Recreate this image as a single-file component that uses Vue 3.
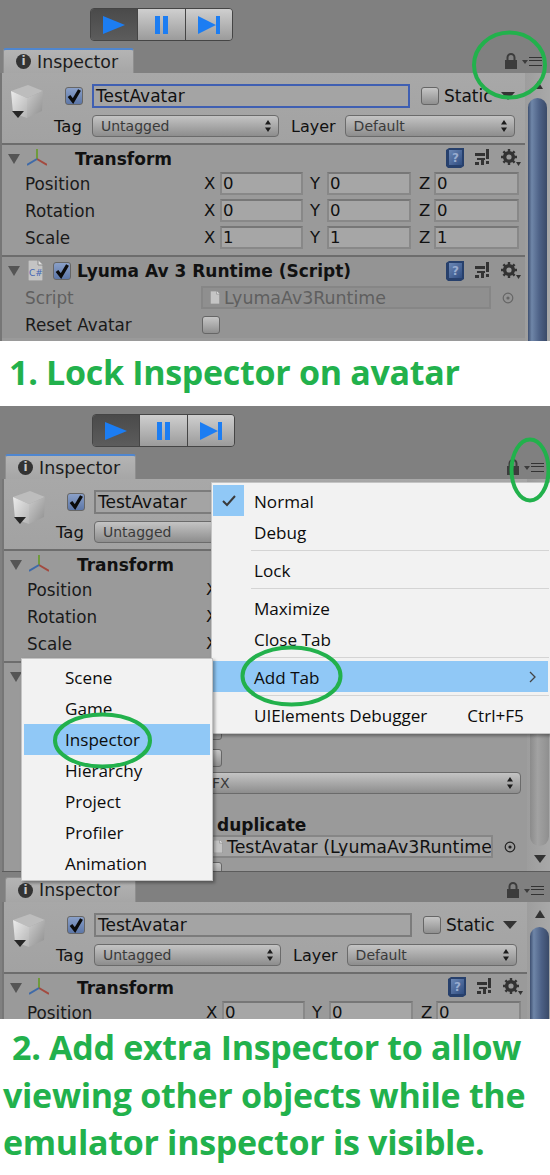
<script setup>
const transformRows = [
  { label: 'Position', value: '0' },
  { label: 'Rotation', value: '0' },
  { label: 'Scale', value: '1' },
]

const panels = [
  { id: 1, toolbar: true, focused: true, height: 341 },
  { id: 2, toolbar: true, focused: false, height: 465 },
  { id: 3, toolbar: false, focused: false, height: 148 },
]

const mainMenu = [
  [{ text: 'Normal', checked: true }, { text: 'Debug' }],
  [{ text: 'Lock' }],
  [{ text: 'Maximize' }, { text: 'Close Tab' }],
  [{ text: 'Add Tab', active: true, arrow: true }],
  [{ text: 'UIElements Debugger', shortcut: 'Ctrl+F5' }],
]

const tabMenu = ['Scene', 'Game', 'Inspector', 'Hierarchy', 'Project', 'Profiler', 'Animation']
</script>

<template>
  <div class="page">
    <svg class="defs" width="0" height="0" aria-hidden="true">
      <defs>
        <linearGradient id="cube-left" x1="0" y1="0" x2="1" y2="1">
          <stop offset="0" stop-color="#ececec" />
          <stop offset="1" stop-color="#b4b4b4" />
        </linearGradient>
        <linearGradient id="cube-right" x1="0" y1="0" x2="1" y2="1">
          <stop offset="0" stop-color="#cccccc" />
          <stop offset="1" stop-color="#8e8e8e" />
        </linearGradient>
        <linearGradient id="book" x1="0" y1="0" x2="1" y2="1">
          <stop offset="0" stop-color="#6c88b6" />
          <stop offset="1" stop-color="#2f4c80" />
        </linearGradient>
      </defs>
      <symbol id="i-cube" viewBox="0 0 34 34">
        <polygon points="1,6 18,0 33,6 17,13" fill="#bdbdbd" />
        <polygon points="1,6 17,13 17,33 3,28" fill="url(#cube-left)" />
        <polygon points="17,13 33,6 32,26 17,33" fill="url(#cube-right)" />
      </symbol>
      <symbol id="i-axis" viewBox="0 0 20 18">
        <path d="M10 10 V0" stroke="#6f9a3c" stroke-width="2" fill="none" />
        <path d="M10 10 L20 16" stroke="#a34a3f" stroke-width="2" fill="none" />
        <path d="M10 10 L0 16" stroke="#3f6aa8" stroke-width="2" fill="none" />
      </symbol>
      <symbol id="i-help" viewBox="0 0 18 20">
        <path d="M0 2 L3 0 H18 V18 L15 20 H2 L0 18 Z" fill="#27406c" />
        <rect x="3" y="2" width="13" height="15" fill="url(#book)" />
        <text x="9.5" y="14" font-size="12" font-weight="700" font-family="DejaVu Sans, sans-serif" text-anchor="middle" fill="#98acd0">?</text>
      </symbol>
      <symbol id="i-preset" viewBox="0 0 15 20">
        <path d="M0 5 H10 V8 H0 Z M11 1 H14 V11 H11 Z M11 13 H14 V16 H11 Z M2 10 H10 V12 H2 Z M6 12 H9 V17 H6 Z M0 14 H4 V17 H0 Z" fill="#333" />
      </symbol>
      <symbol id="i-gear" viewBox="0 0 20 18">
        <circle cx="8" cy="8" r="4.6" fill="none" stroke="#333" stroke-width="3" />
        <path d="M8 0 V16 M0 8 H16 M2.4 2.4 L13.6 13.6 M13.6 2.4 L2.4 13.6" stroke="#333" stroke-width="2.4" />
        <circle cx="8" cy="8" r="2.6" fill="#999" />
        <path d="M15 13 H20 L17.5 17 Z" fill="#333" />
      </symbol>
      <symbol id="i-file" viewBox="0 0 15 21">
        <path d="M0 0 H10 L15 5 V21 H0 Z" fill="#c4c4c4" stroke="#8a8a8a" />
        <path d="M10 0 V5 H15" fill="#e0e0e0" stroke="#8a8a8a" />
      </symbol>
      <symbol id="i-lock" viewBox="0 0 14 16">
        <path d="M3.5 7 V4.5 A3.5 3.5 0 0 1 10.5 4.5 V7" fill="none" stroke="#3c3c3c" stroke-width="2" />
        <rect x="1" y="7" width="12" height="9" fill="#3c3c3c" />
      </symbol>
      <symbol id="i-target" viewBox="0 0 12 12">
        <circle cx="6" cy="6" r="4.8" fill="none" stroke="currentColor" stroke-width="1.2" />
        <circle cx="6" cy="6" r="1.6" fill="currentColor" />
      </symbol>
      <symbol id="i-tick" viewBox="0 0 16 16">
        <path d="M3 8 L7 13 L13.5 2" fill="none" stroke="#0b0b0b" stroke-width="3.3" />
      </symbol>
      <symbol id="i-updown" viewBox="0 0 6 12">
        <path d="M3 0 L6 4.6 H0 Z M3 12 L0 7.4 H6 Z" fill="#1c1c1c" />
      </symbol>
    </svg>

    <template v-for="p in panels" :key="p.id">
      <section class="panel" :class="{ inset: p.id > 1, last: p.id === 3 }" :style="{ height: p.height + 'px' }">
        <div v-if="p.toolbar" class="toolbar">
          <div class="play-group">
            <button class="play-btn on">
              <svg width="24" height="20" viewBox="0 0 24 20"><path d="M1 1 L23 10 L1 19 Z" fill="#1c7df2" /></svg>
            </button>
            <button class="play-btn">
              <svg width="15" height="20" viewBox="0 0 15 20"><path d="M1 1 H6 V19 H1 Z M9 1 H14 V19 H9 Z" fill="#1c7df2" /></svg>
            </button>
            <button class="play-btn">
              <svg width="24" height="20" viewBox="0 0 24 20"><path d="M1 1 L19 10 L1 19 Z M19 1 H23 V19 H19 Z" fill="#1c7df2" /></svg>
            </button>
          </div>
        </div>

        <div class="tabbar">
          <div class="tab" :class="{ focused: p.id !== 3 }">
            <span class="info">i</span>
            <span>Inspector</span>
          </div>
          <div class="tab-tools">
            <svg width="14" height="16"><use href="#i-lock" /></svg>
            <span class="caret"></span>
            <span class="lines"></span>
          </div>
        </div>

        <div class="main">
          <div class="content">
            <header class="head">
              <div class="cube">
                <svg width="34" height="34"><use href="#i-cube" /></svg>
                <span class="cube-arrow"></span>
              </div>
              <div class="head-rows">
                <div class="head-row first">
                  <span class="check on"><svg width="16" height="16"><use href="#i-tick" /></svg></span>
                  <div class="name" :class="{ focused: p.focused }">TestAvatar</div>
                  <span class="check"></span>
                  <span class="static">Static</span>
                  <span class="static-arrow"></span>
                </div>
                <div class="head-row">
                  <span class="head-label tag">Tag</span>
                  <div class="dropdown tag-drop">Untagged<svg width="6" height="12"><use href="#i-updown" /></svg></div>
                  <span class="head-label layer">Layer</span>
                  <div class="dropdown layer-drop">Default<svg width="6" height="12"><use href="#i-updown" /></svg></div>
                </div>
              </div>
            </header>

            <div class="comp transform-comp">
              <div class="comp-head">
                <span class="fold"></span>
                <svg class="axis" width="20" height="18"><use href="#i-axis" /></svg>
                <span class="comp-title transform">Transform</span>
                <div class="comp-tools">
                  <svg width="18" height="20"><use href="#i-help" /></svg>
                  <svg width="15" height="20"><use href="#i-preset" /></svg>
                  <svg width="20" height="18"><use href="#i-gear" /></svg>
                </div>
              </div>
              <div v-for="r in transformRows" :key="r.label" class="row">
                <span class="label">{{ r.label }}</span>
                <span class="axis-l x">X</span><div class="num w83">{{ r.value }}</div>
                <span class="axis-l y">Y</span><div class="num w84">{{ r.value }}</div>
                <span class="axis-l z">Z</span><div class="num w85">{{ r.value }}</div>
              </div>
            </div>

            <div class="comp script-comp" :class="{ dim: p.focused }">
              <div class="comp-head">
                <span class="fold"></span>
                <span class="script-file">
                  <svg width="15" height="21"><use href="#i-file" /></svg>
                  <span class="cs">C#</span>
                </span>
                <span class="check on small"><svg width="16" height="16"><use href="#i-tick" /></svg></span>
                <span class="comp-title">Lyuma Av 3 Runtime (Script)</span>
                <div class="comp-tools">
                  <svg width="18" height="20"><use href="#i-help" /></svg>
                  <svg width="15" height="20"><use href="#i-preset" /></svg>
                  <svg width="20" height="18"><use href="#i-gear" /></svg>
                </div>
              </div>
              <div class="row">
                <span class="label muted">Script</span>
                <div class="ref muted">
                  <span class="ref-file"><svg width="10" height="13"><use href="#i-file" /></svg></span>
                  LyumaAv3Runtime
                </div>
                <svg class="target" width="12" height="12"><use href="#i-target" /></svg>
              </div>
              <div class="row">
                <span class="label">Reset Avatar</span>
                <span class="check box-cell"></span>
              </div>
              <template v-if="p.id === 2">
                <div class="row">
                  <span class="label"></span>
                  <span class="check box-cell"></span>
                </div>
                <div class="row">
                  <span class="label"></span>
                  <div class="dropdown fx-drop">FX<svg width="6" height="12"><use href="#i-updown" /></svg></div>
                </div>
                <div class="sub-title">duplicate</div>
                <div class="row slim">
                  <span class="label"></span>
                  <div class="ref dark">
                    <span class="ref-file"><svg width="10" height="13"><use href="#i-file" /></svg></span>
                    TestAvatar (LyumaAv3Runtime)
                  </div>
                  <svg class="target dark-t" width="12" height="12"><use href="#i-target" /></svg>
                </div>
                <div class="row">
                  <span class="label"></span>
                  <span class="check box-cell"></span>
                </div>
              </template>
            </div>
          </div>

          <div class="scrollbar">
            <span class="arrow-up"></span>
            <div class="thumb" :class="{ grey: p.id === 2, open: p.id !== 2 }"></div>
            <span v-if="p.id === 2" class="arrow-down"></span>
          </div>
        </div>
      </section>

      <div v-if="p.id === 1" class="caption one">1. Lock Inspector on avatar</div>
    </template>

    <div class="caption two">
      <div class="indent">2. Add extra Inspector to allow</div>
      <div>viewing other objects while the</div>
      <div>emulator inspector is visible.</div>
    </div>

    <div class="menu main-menu">
      <template v-for="(group, i) in mainMenu" :key="i">
        <div v-if="i > 0" class="sep"></div>
        <div v-for="item in group" :key="item.text" class="item" :class="{ active: item.active }">
          <span class="gutter" :class="{ ticked: item.checked }">
            <svg v-if="item.checked" width="16" height="13" viewBox="0 0 16 13"><path d="M2 7 L6 11 L14 2" fill="none" stroke="#3a3a3a" stroke-width="2" /></svg>
          </span>
          <span class="item-text">{{ item.text }}</span>
          <span v-if="item.shortcut" class="shortcut">{{ item.shortcut }}</span>
          <svg v-if="item.arrow" class="chev" width="7" height="12" viewBox="0 0 7 12"><path d="M1 1 L6 6 L1 11" fill="none" stroke="#444" stroke-width="1.3" /></svg>
        </div>
      </template>
    </div>

    <div class="menu tab-menu">
      <div v-for="name in tabMenu" :key="name" class="tab-item" :class="{ active: name === 'Inspector' }">{{ name }}</div>
    </div>

    <!-- hand drawn green circles on top of the screenshot -->
    <svg class="marks" width="550" height="1175" viewBox="0 0 550 1175" fill="none" stroke="#22b14c" stroke-width="4">
      <ellipse cx="509.5" cy="65" rx="35.5" ry="32.5" />
      <ellipse cx="530" cy="470" rx="18.5" ry="30.5" />
      <ellipse cx="291.5" cy="676" rx="49" ry="28.5" />
      <ellipse cx="102.5" cy="740.5" rx="47.5" ry="26" />
    </svg>
  </div>
</template>

<style>
body {
  margin: 0;
  background: #fff;
}
</style>

<style scoped>
.page {
  position: relative;
  width: 550px;
  height: 1175px;
  overflow: hidden;
  background: #fff;
  font-family: "DejaVu Sans", sans-serif;
  color: #111;
}

.defs {
  position: absolute;
}

.panel {
  width: 550px;
  display: flex;
  flex-direction: column;
  overflow: hidden;
  background: #808080;
}

.panel.inset {
  padding-left: 2px;
}

.toolbar {
  height: 48px;
  flex: none;
  padding: 8px 0 0 90px;
  box-sizing: border-box;
}

.play-group {
  display: flex;
  width: 143px;
  height: 33px;
  border: 1px solid #454545;
  border-radius: 4px;
  box-sizing: border-box;
  overflow: hidden;
}

.play-btn {
  flex: 1;
  padding: 0;
  border: 0;
  border-right: 1px solid #454545;
  background: linear-gradient(#cfcfcf, #9b9b9b);
  display: flex;
  align-items: center;
  justify-content: center;
}

.play-btn:last-child {
  border-right: 0;
}

.play-btn.on {
  background: linear-gradient(#4a4a4a, #5c5c5c);
}

.tabbar {
  height: 25px;
  flex: none;
  display: flex;
  justify-content: space-between;
  align-items: flex-end;
}

.last .tabbar {
  height: 31px;
  border-top: 1px solid #5c5c5c;
  box-sizing: border-box;
}

.tab {
  width: 131px;
  height: 25px;
  margin-left: 3px;
  box-sizing: border-box;
  padding-left: 12px;
  display: flex;
  align-items: center;
  gap: 6px;
  background: linear-gradient(#b4b4b4, #a6a6a6);
  border: 1px solid #8f8f8f;
  border-bottom: 0;
  border-radius: 3px 3px 0 0;
  font-size: 17.4px;
  color: #1c1c1c;
}

.tab.focused {
  border-top: 2px solid #4f86cf;
}

.info {
  width: 15px;
  height: 15px;
  border-radius: 50%;
  background: #333;
  color: #c8c8c8;
  font-size: 12px;
  font-weight: 700;
  line-height: 15px;
  text-align: center;
}

.tab-tools {
  display: flex;
  align-items: center;
  height: 25px;
  padding-right: 8px;
}

.caret {
  margin: 2px 1px 0 4px;
  border: 3px solid transparent;
  border-top: 4px solid #3c3c3c;
  border-bottom: 0;
}

.lines {
  width: 13px;
  height: 2px;
  border-top: 1px solid #333;
  border-bottom: 1px solid #333;
  box-shadow: 0 4px 0 -0px #808080, 0 5px 0 #333;
  margin-top: -3px;
}

.main {
  flex: 1;
  min-height: 0;
  display: flex;
}

.content {
  width: 523px;
  flex: none;
  border-left: 2px solid #767676;
  background: #9a9a9a;
}

.head {
  height: 70px;
  display: flex;
  padding-top: 11px;
  box-sizing: border-box;
  background: linear-gradient(#a8a8a8, #a2a2a2);
}

.cube {
  width: 50px;
  flex: none;
  padding: 1px 0 0 8px;
  box-sizing: border-box;
  position: relative;
}

.cube svg {
  display: block;
}

.cube-arrow {
  position: absolute;
  left: 10px;
  top: 27px;
  border: 6px solid transparent;
  border-top: 7px solid #262626;
  border-bottom: 0;
}

.head-rows {
  display: flex;
  flex-direction: column;
  gap: 7px;
}

.head-row {
  display: flex;
  align-items: center;
}

.head-row.first {
  height: 24px;
}

.check {
  width: 18px;
  height: 18px;
  flex: none;
  box-sizing: border-box;
  border: 1px solid #666;
  border-radius: 3px;
  background: linear-gradient(#c6c6c6, #8f8f8f);
  display: flex;
  align-items: center;
  justify-content: center;
}

.check.on {
  background: linear-gradient(#8aa0c8, #5d77a8);
}

.head-row.first .check.on {
  margin-left: 13px;
}

.name {
  width: 318px;
  height: 24px;
  margin-left: 9px;
  margin-right: 11px;
  box-sizing: border-box;
  padding-left: 2px;
  border: 2px solid #7c7c7c;
  background: #a4a4a4;
  font-size: 17px;
  line-height: 21px;
  color: #111;
}

.name.focused {
  border-color: #3f5fb2;
}

.static {
  margin-left: 5px;
  font-size: 17px;
}

.static-arrow {
  margin-left: 8px;
  border: 7.5px solid transparent;
  border-top: 8px solid #333;
  border-bottom: 0;
}

.head-label {
  font-size: 16.5px;
  flex: none;
}

.tag {
  width: 40px;
  padding-left: 2px;
  box-sizing: border-box;
}

.layer {
  margin: 0 9px 0 12px;
  font-size: 16px;
}

.dropdown {
  height: 22px;
  box-sizing: border-box;
  padding: 0 7px 0 8px;
  display: flex;
  align-items: center;
  justify-content: space-between;
  border: 1px solid #6b6b6b;
  border-radius: 4px;
  background: linear-gradient(#c4c4c4, #8d8d8d);
  font-size: 14px;
  color: #3a3a3a;
}

.tag-drop {
  width: 187px;
}

.layer-drop {
  width: 170px;
}

.fx-drop {
  width: 316px;
  margin-left: 2px;
  padding-left: 6px;
  margin-top: -3px;
}

.comp {
  border-top: 2px solid #6d6d6d;
}

.transform-comp {
  padding-bottom: 4px;
}

.comp-head {
  height: 27px;
  display: flex;
  align-items: center;
  padding-left: 6px;
}

.transform-comp .comp-head {
  height: 25px;
  box-sizing: border-box;
  padding-top: 3px;
}

.transform-comp .comp-tools {
  margin-top: -3px;
}

.fold {
  flex: none;
  border: 6px solid transparent;
  border-top: 10px solid #555;
  border-bottom: 0;
}

.axis {
  margin-left: 7px;
  margin-top: -3px;
}

.comp-title {
  font-size: 17px;
  font-weight: 700;
  margin-left: 6px;
  white-space: nowrap;
}

.comp-title.transform {
  margin-left: 28px;
}

.comp-tools {
  margin-left: auto;
  margin-right: 4px;
  display: flex;
  align-items: center;
  gap: 11px;
}

.row {
  height: 27px;
  display: flex;
  align-items: center;
}

.row.slim {
  height: 21px;
}

.label {
  width: 176px;
  padding-left: 23px;
  flex: none;
  font-size: 16.8px;
  white-space: nowrap;
  color: #1a1a1a;
}

.axis-l {
  font-size: 16.5px;
  flex: none;
}

.x {
  width: 16px;
  margin-left: 3px;
}

.y {
  width: 17px;
  margin-left: 7px;
}

.z {
  width: 15px;
  margin-left: 8px;
}

.num {
  height: 23px;
  box-sizing: border-box;
  border: 2px solid #888;
  border-top-color: #777;
  background: #a6a6a6;
  padding-left: 1px;
  font-size: 16.5px;
  line-height: 19px;
}

.w83 {
  width: 83px;
}

.w84 {
  width: 84px;
}

.w85 {
  width: 85px;
}

.script-comp.dim {
  background: #949494;
}

.script-file {
  position: relative;
  width: 15px;
  height: 21px;
  margin-left: 8px;
  flex: none;
}

.script-file svg {
  display: block;
}

.cs {
  position: absolute;
  left: 1px;
  bottom: 3px;
  font-size: 9px;
  color: #3f64b4;
}

.check.small {
  margin-left: 10px;
}

.muted {
  color: #5f5f5f;
}

.ref {
  width: 290px;
  height: 23px;
  box-sizing: border-box;
  border: 2px solid #868686;
  padding-left: 7px;
  display: flex;
  align-items: center;
  gap: 4px;
  font-size: 17.4px;
  white-space: nowrap;
  overflow: hidden;
}

.ref.muted {
  background: #8f8f8f;
}

.ref.dark {
  background: #a6a6a6;
  color: #111;
  padding-left: 8px;
  font-size: 17.4px;
}

.ref-file {
  flex: none;
  line-height: 0;
}

.target {
  margin-left: 11px;
  color: #666;
}

.target.dark-t {
  color: #222;
}

.box-cell {
  margin-left: 1px;
}

.sub-title {
  height: 22px;
  margin-top: 16px;
  padding-left: 213px;
  font-size: 17px;
  font-weight: 700;
  line-height: 22px;
}

.scrollbar {
  flex: 1;
  min-width: 0;
  display: flex;
  flex-direction: column;
  align-items: center;
  background: linear-gradient(90deg, #9d9d9d, #a9a9a9);
}

.arrow-up {
  flex: none;
  margin: 8px 0 9px;
  border: 5.5px solid transparent;
  border-bottom: 8px solid #333;
  border-top: 0;
}

.arrow-down {
  flex: none;
  margin: 9px 0 8px;
  border: 6px solid transparent;
  border-top: 8px solid #333;
  border-bottom: 0;
}

.thumb {
  flex: 1;
  width: 19px;
  border-radius: 10px;
  background: linear-gradient(90deg, #3d4f70, #6f86a8 20%, #4d6186 60%, #3a4a68);
}

.thumb.open {
  border-radius: 10px 10px 0 0;
}

.thumb.grey {
  background: linear-gradient(90deg, #8b8b8b, #a2a2a2 40%, #8f8f8f);
}

.caption {
  color: #22b14c;
  font-family: "Open Sans", "Noto Sans", sans-serif;
  font-weight: 700;
  font-size: 34px;
  letter-spacing: -0.3px;
  white-space: nowrap;
}

.caption.one {
  height: 65px;
  padding-left: 9px;
  line-height: 62px;
}

.caption.two {
  height: 156px;
  padding: 5px 0 0 3px;
  box-sizing: border-box;
  line-height: 47.5px;
}

.indent {
  padding-left: 9px;
}

.menu {
  position: absolute;
  box-sizing: border-box;
  background: #f2f2f2;
  border: 1px solid #c4c4c4;
  box-shadow: 2px 2px 3px rgba(0, 0, 0, 0.35);
  font-family: "Open Sans", "Noto Sans", sans-serif;
  font-size: 17.1px;
  color: #0c0c0c;
}

.main-menu {
  left: 211px;
  top: 482px;
  width: 345px;
  padding: 2px 0 3px 1px;
}

.item {
  height: 31px;
  width: 335px;
  display: flex;
  align-items: center;
}

.item.active {
  background: #90c8f6;
}

.gutter {
  width: 31px;
  height: 31px;
  flex: none;
  display: flex;
  align-items: center;
  justify-content: center;
}

.gutter.ticked {
  background: #90c8f6;
}

.item-text {
  margin-left: 10px;
  padding-top: 2px;
}

.shortcut {
  margin-left: 40px;
  padding-top: 2px;
}

.chev {
  margin-left: auto;
  margin-right: 12px;
}

.sep {
  height: 1px;
  width: 298px;
  margin: 3px 0 3px 38px;
  background: #d4d4d4;
}

.tab-menu {
  left: 21px;
  top: 658px;
  width: 192px;
  height: 223px;
  padding: 3px 2px;
}

.tab-item {
  height: 31px;
  padding-left: 41px;
  line-height: 31px;
}

.tab-item.active {
  background: #90c8f6;
}

.marks {
  position: absolute;
  left: 0;
  top: 0;
  pointer-events: none;
}
</style>
